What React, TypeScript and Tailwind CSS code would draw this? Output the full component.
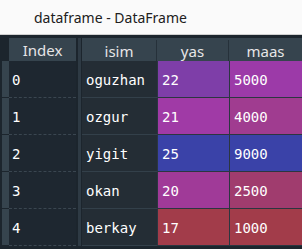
const rows = [
  { i: 0, name: "oguzhan", yas: "22", maas: "5000", yc: "bg-[#7e3ea8]", mc: "bg-[#9c3aa8]" },
  { i: 1, name: "ozgur", yas: "21", maas: "4000", yc: "bg-[#a03aa6]", mc: "bg-[#a03c90]" },
  { i: 2, name: "yigit", yas: "25", maas: "9000", yc: "bg-[#3a42a8]", mc: "bg-[#3a42a8]" },
  { i: 3, name: "okan", yas: "20", maas: "2500", yc: "bg-[#a03a98]", mc: "bg-[#a03c6e]" },
  { i: 4, name: "berkay", yas: "17", maas: "1000", yc: "bg-[#a23c4a]", mc: "bg-[#a23c4a]" },
];

const mono = "font-['DejaVu_Sans_Mono',monospace]";

export default function App() {
  return (
    <div className="w-[302px] h-[249px] overflow-hidden bg-[#1c252d] font-['Noto_Sans',sans-serif]">
      {/* title */}
      <div className="h-[35px] bg-[#fafafa] border-b border-[#d0d0d0] flex items-center pl-[34px] pt-[1px] text-[14px] text-[#202020]">
        dataframe - DataFrame
      </div>

      <div className="pt-[3px] flex">
        {/* left strip + index column */}
        <div className="flex flex-col">
          <div className="flex h-[23px]">
            <div className="w-[9px] bg-[#1c252d]" />
            <div className="w-[67px] bg-[#36444e] flex items-center justify-center pt-[2px] text-[15px] text-[#e6e6e6]">Index</div>
          </div>
          {rows.map((r) => (
            <div key={r.i} className="flex h-[37px] first:mt-[2px]">
              <div className="w-[9px] pl-[2px]">
                <div className="w-[7px] h-[36px] bg-[#36444e]" />
              </div>
              <div className={`w-[67px] bg-[#1e2730] border-b border-dashed border-[#3a4650] flex items-center pl-[3px] pt-[2px] text-[14px] text-white ${mono}`}>
                {r.i}
              </div>
            </div>
          ))}
        </div>

        {/* separator */}
        <div className="w-[6px] flex justify-center">
          <div className="w-[3px] h-full bg-[#2e3a44]" />
        </div>

        {/* data columns */}
        <div className="flex-1 flex flex-col">
          <div className="grid grid-cols-[75px_72px_1fr] h-[23px] bg-[#36444e] pt-[2px] text-[15px] text-[#e6e6e6]">
            <div className="flex items-center justify-center border-r border-[#26313a]">isim</div>
            <div className="flex items-center justify-center border-r border-[#26313a]">yas</div>
            <div className="flex items-center justify-center">maas</div>
          </div>
          {rows.map((r) => (
            <div key={r.i} className={`grid grid-cols-[75px_72px_1fr] h-[37px] first:mt-[2px] text-[14px] text-white ${mono}`}>
              <div className="bg-[#242d35] border-b border-[#33404a] flex items-center pl-[4px] pt-[2px]">{r.name}</div>
              <div className={`${r.yc} border-b border-l border-[#2b3640] flex items-center pl-[4px] pt-[2px]`}>{r.yas}</div>
              <div className={`${r.mc} border-b border-l border-[#2b3640] flex items-center pl-[4px] pt-[2px]`}>{r.maas}</div>
            </div>
          ))}
        </div>
      </div>
    </div>
  );
}
